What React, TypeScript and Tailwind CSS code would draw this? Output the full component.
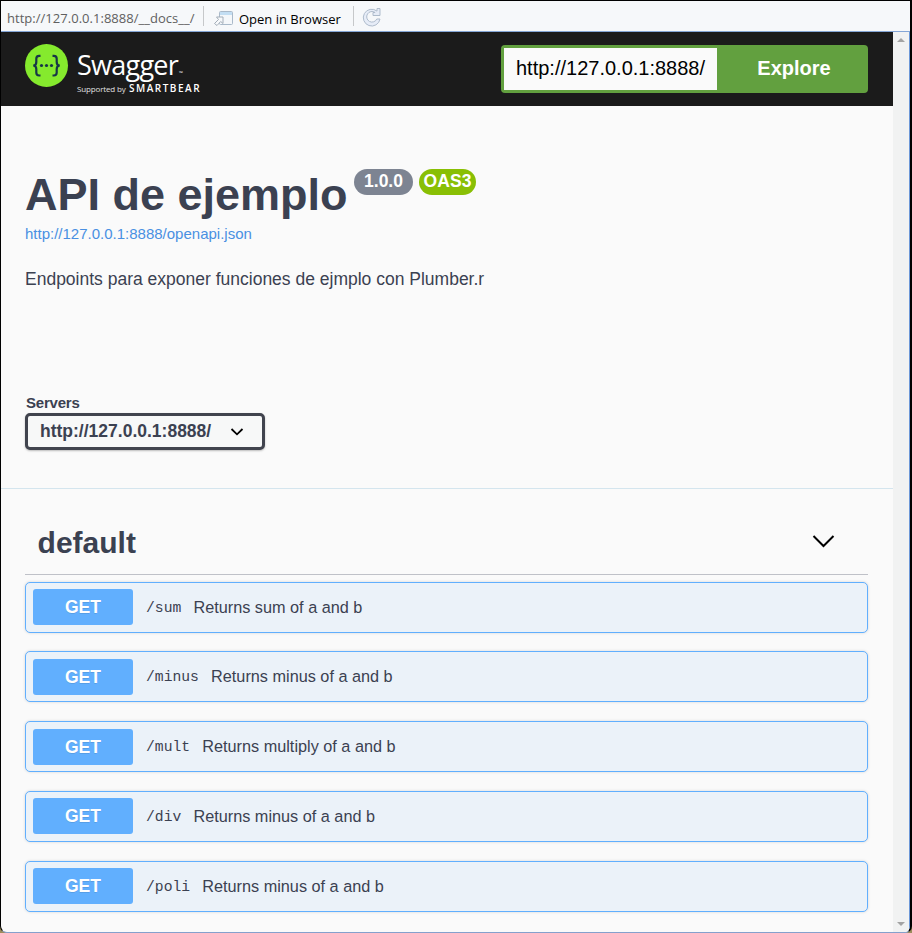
const sans = "font-['Liberation_Sans',Arial,sans-serif]";

const operations = [
  { path: '/sum', text: 'Returns sum of a and b', box: 'mt-[7px]', badge: 'mt-[6px]' },
  { path: '/minus', text: 'Returns minus of a and b', box: 'mt-[18px]', badge: 'mt-[7px]' },
  { path: '/mult', text: 'Returns multiply of a and b', box: 'mt-[19px]', badge: 'mt-[7px]' },
  { path: '/div', text: 'Returns minus of a and b', box: 'mt-[19px]', badge: 'mt-[6px]' },
  { path: '/poli', text: 'Returns minus of a and b', box: 'mt-[19px]', badge: 'mt-[6px]' },
];

function OpenIcon() {
  return (
    <svg width="20" height="16" viewBox="0 0 20 16" fill="none">
      <rect x="5.5" y="1.5" width="13" height="13" rx="1" fill="#f4f7fa" stroke="#a9b9c9" />
      <path d="M6 2h12v3H6z" fill="#c3def3" />
      <path d="M0.5 13.5l4-4-2-2.5h6.5v6.5l-2.3-2-3.7 4z" fill="#f7f9fb" stroke="#a3adb8" />
    </svg>
  );
}

function RefreshIcon() {
  return (
    <svg width="20" height="20" viewBox="0 0 20 20" fill="none">
      <path
        d="M15 4.1V1.5h3v7h-7v-3h2.1A5.3 5.3 0 1 0 14.8 12H18A8.4 8.4 0 1 1 15 4.1z"
        fill="#e6ecf7"
        stroke="#aebbcb"
        strokeLinejoin="round"
      />
    </svg>
  );
}

function Toolbar() {
  return (
    <div className="flex h-[31px] shrink-0 items-center border-b border-[#85a6d6] bg-[#f6f8fa] pt-[4px] font-['Open_Sans','Noto_Sans',sans-serif]">
      <span className="-mt-px ml-[6px] w-[189px] whitespace-nowrap text-[13px] leading-5 tracking-[0.03px] text-[#606060]">
        http://127.0.0.1:8888/__docs__/
      </span>
      <span className="-mt-[4px] ml-[7px] h-5 w-px bg-[#c6c8ca]" />
      <span className="ml-[10px]"><OpenIcon /></span>
      <span className="ml-[5px] w-[102px] whitespace-nowrap pt-[2px] text-[13px] leading-5 text-black">
        Open in Browser
      </span>
      <span className="-mt-[4px] ml-[12px] h-5 w-px bg-[#c6c8ca]" />
      <span className="-mt-[3px] ml-[8px]"><RefreshIcon /></span>
    </div>
  );
}

function Logo() {
  return (
    <div className="flex">
      <svg width="44" height="44" viewBox="0 0 44 44" fill="none">
        <circle cx="21.5" cy="21.5" r="21.5" fill="#85ea2d" />
        <g stroke="#173647" strokeWidth="2.2">
          <path d="M15.5 11.8h-1.4c-2 0-2.8 1-2.8 3v3.1c0 2.3-.8 3.6-3.1 3.6 2.3 0 3.1 1.3 3.1 3.6v3.4c0 2 .8 3 2.8 3h1.4" />
          <path d="M27.5 11.8h1.4c2 0 2.8 1 2.8 3v3.1c0 2.3.8 3.6 3.1 3.6-2.3 0-3.1 1.3-3.1 3.6v3.4c0 2-.8 3-2.8 3h-1.4" />
        </g>
        <g fill="#173647">
          <circle cx="16.5" cy="21.5" r="1.6" />
          <circle cx="21.5" cy="21.5" r="1.6" />
          <circle cx="26.5" cy="21.5" r="1.6" />
        </g>
      </svg>
      <div className="ml-[8px] flex flex-col font-['Open_Sans','Noto_Sans',sans-serif] text-white">
        <div className="flex h-[38px] items-end">
          <span className="-mb-px text-[27px] leading-[36px] tracking-[-0.75px]">Swagger</span>
          <span className="mb-[6px] ml-px text-[5px] leading-none">™</span>
        </div>
        <div className="flex items-baseline whitespace-nowrap leading-[12px]">
          <span className="w-[52px] text-[8px] tracking-[-0.15px] text-[#e0e0e0]">Supported by</span>
          <span className="text-[10px] font-semibold tracking-[1.5px]">SMARTBEAR</span>
        </div>
      </div>
    </div>
  );
}

function Header() {
  return (
    <header className="flex h-[74px] shrink-0 justify-between bg-[#1b1b1b] pl-6 pr-[25px]">
      <div className="pt-[12px]"><Logo /></div>
      <div className="mt-[13px] flex h-[48px] w-[367px] rounded-[4px] bg-[#62a03f]">
        <div className="my-[3px] ml-[3px] w-[213px] whitespace-nowrap bg-[#fafafa] pl-[12px] text-[20px] leading-[40px] text-black">
          http://127.0.0.1:8888/
        </div>
        <div className="flex-1 pl-[3px] text-center text-[20px] font-bold leading-[46px] text-white">Explore</div>
      </div>
    </header>
  );
}

function Info() {
  return (
    <section className="h-[284px] pl-6 pt-[62px] text-[#3b4151]">
      <div className="flex h-[55px] items-start">
        <h1 className="w-[329px] whitespace-nowrap text-[45px] font-bold leading-[54px]">API de ejemplo</h1>
        <span className="mt-px h-[26px] w-[59px] rounded-full bg-[#7d8492] text-center text-[17.5px] font-bold leading-[24px] text-white">
          1.0.0
        </span>
        <span className="ml-[6px] mt-px h-[26px] w-[57px] rounded-full bg-[#89bf04] text-center text-[17.5px] font-bold leading-[24px] tracking-[0.1px] text-white">
          OAS3
        </span>
      </div>
      <div className="mt-[2px] text-[15px] leading-[18px] text-[#4990e2]">http://127.0.0.1:8888/openapi.json</div>
      <p className="mt-[25px] text-[17.5px] leading-[22px]">Endpoints para exponer funciones de ejmplo con Plumber.r</p>
    </section>
  );
}

function Servers() {
  return (
    <section className="h-[99px] border-b border-[#d4e5ee] pl-6 pt-[4px] text-[#3b4151]">
      <div className="pl-px text-[15px] font-bold leading-[18px] tracking-[-0.2px]">Servers</div>
      <div className="mt-px flex h-[37px] w-[240px] items-center rounded-[5px] border-[3px] border-[#41444e] bg-[#f7f8f8] pl-[12px] shadow-[0_1px_2px_rgba(0,0,0,0.25)]">
        <span className="-mt-[2px] w-[172px] whitespace-nowrap text-[17.5px] font-bold leading-[20px]">http://127.0.0.1:8888/</span>
        <svg className="ml-[18px] mt-px" width="14" height="10" viewBox="0 0 14 10" fill="none">
          <path d="M1.5 2l5.5 5.3L12.5 2" stroke="#000" strokeWidth="1.8" />
        </svg>
      </div>
    </section>
  );
}

export default function App() {
  return (
    <div className={`h-[933px] w-[912px] overflow-hidden bg-[#9c8c5c] ${sans}`}>
      <div className="flex h-[933px] flex-col overflow-hidden rounded-b-[7px] border-b border-l border-r-2 border-t border-b-[#85a0cc] border-l-black border-r-black border-t-black bg-[#fafafa]">
        <Toolbar />
        <div className="flex min-h-0 flex-1 border-r border-[#6c98d8]">
          <main className="flex w-[892px] shrink-0 flex-col">
            <Header />
            <Info />
            <Servers />
            <section className="pl-6 pr-[25px] text-[#3b4151]">
              <div className="flex h-[86px] items-start justify-between border-b border-[#bfc1c8] pl-[12.6px] pr-[33px] pt-[35px]">
                <h2 className="text-[30px] font-bold leading-[38px]">default</h2>
                <svg className="mt-[10px]" width="24" height="16" viewBox="0 0 24 16" fill="none">
                  <path d="M2.5 2l10 10 10-10" stroke="#000" strokeWidth="2" />
                </svg>
              </div>
              {operations.map((op) => (
                <div
                  key={op.path}
                  className={`${op.box} flex h-[51px] items-center whitespace-nowrap rounded-[5px] border border-[#61affe] bg-[#ebf2f9] pl-[7px] shadow-[0_0_3px_rgba(0,0,0,0.15)]`}
                >
                  <span className={`${op.badge} h-[36px] w-[100px] self-start rounded-[3px] bg-[#61affe]`}>
                    <span className="block text-center text-[17.5px] font-bold leading-[36px] text-white [text-shadow:0_1px_0_rgba(0,0,0,0.1)]">
                      GET
                    </span>
                  </span>
                  <code className="ml-[13px] pt-px font-['Liberation_Mono',monospace] text-[14.7px] font-normal">{op.path}</code>
                  <span className="ml-[12.2px] text-[16.25px]">{op.text}</span>
                </div>
              ))}
            </section>
          </main>
          <div className="flex flex-1 flex-col items-center justify-between bg-[#f1f2f2] pb-[5px] pt-[6px]">
            <svg width="8" height="5" viewBox="0 0 8 5"><path d="M4 0l4 4H0z" fill="#a3a3a3" /></svg>
            <svg width="8" height="5" viewBox="0 0 8 5"><path d="M0 0h8L4 4z" fill="#a3a3a3" /></svg>
          </div>
        </div>
      </div>
    </div>
  );
}
